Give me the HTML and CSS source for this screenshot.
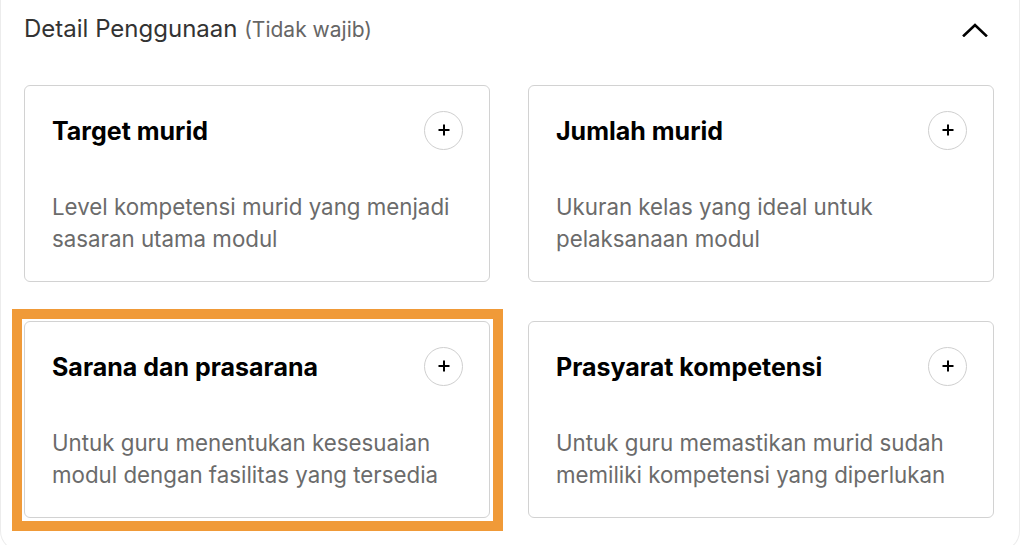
FILE: index.html
```html
<!DOCTYPE html>
<html lang="id">
<head>
<meta charset="utf-8">
<link rel="stylesheet" href="styles.css">
</head>
<body>
<div class="panel">
  <div class="header">
    <div class="heading">Detail Penggunaan <span class="optional">(Tidak wajib)</span></div>
    <svg class="chevron" width="26" height="14" viewBox="0 0 26 14"><path d="M2 12.5 L13 2 L24 12.5" fill="none" stroke="#000" stroke-width="2.6" stroke-linecap="square"/></svg>
  </div>
  <div class="grid">
    <div class="card">
      <div class="card-top">
        <div class="card-title">Target murid</div>
        <div class="add"><svg width="14" height="14" viewBox="0 0 14 14"><path d="M7 1.5V12.5M1.5 7H12.5" stroke="#000" stroke-width="2"/></svg></div>
      </div>
      <div class="card-desc">Level kompetensi murid yang menjadi sasaran utama modul</div>
    </div>
    <div class="card">
      <div class="card-top">
        <div class="card-title">Jumlah murid</div>
        <div class="add"><svg width="14" height="14" viewBox="0 0 14 14"><path d="M7 1.5V12.5M1.5 7H12.5" stroke="#000" stroke-width="2"/></svg></div>
      </div>
      <div class="card-desc">Ukuran kelas yang ideal untuk pelaksanaan modul</div>
    </div>
    <div class="card highlighted">
      <div class="card-top">
        <div class="card-title">Sarana dan prasarana</div>
        <div class="add"><svg width="14" height="14" viewBox="0 0 14 14"><path d="M7 1.5V12.5M1.5 7H12.5" stroke="#000" stroke-width="2"/></svg></div>
      </div>
      <div class="card-desc">Untuk guru menentukan kesesuaian modul dengan fasilitas yang tersedia</div>
    </div>
    <div class="card">
      <div class="card-top">
        <div class="card-title">Prasyarat kompetensi</div>
        <div class="add"><svg width="14" height="14" viewBox="0 0 14 14"><path d="M7 1.5V12.5M1.5 7H12.5" stroke="#000" stroke-width="2"/></svg></div>
      </div>
      <div class="card-desc">Untuk guru memastikan murid sudah memiliki kompetensi yang diperlukan</div>
    </div>
  </div>
</div>
</body>
</html>
```

FILE: styles.css
```css
* { box-sizing: border-box; }
html, body { margin: 0; padding: 0; background: #fff; overflow: hidden; }
body { font-family: Inter, "Noto Sans", sans-serif; width: 1020px; height: 545px; }
.panel {
  width: 1020px;
  height: 551px;
  border: 1px solid #ececec;
  border-top: none;
  border-radius: 0 0 20px 20px;
  padding: 0 25px 0 23px;
}
.header {
  height: 85px;
  display: flex;
  justify-content: space-between;
  padding-top: 14px;
  align-items: flex-start;
}
.heading {
  font-size: 24px;
  line-height: 30px;
  color: #333;
}
.optional { font-size: 21px; color: #666; }
.chevron { margin-top: 9px; margin-right: 6px; }
.grid {
  display: grid;
  grid-template-columns: 466px 466px;
  column-gap: 38px;
  row-gap: 39px;
}
.card {
  position: relative;
  border: 1px solid #d2d2d2;
  border-radius: 6px;
  padding: 25px 26px 25px 27px;
  height: 197px;
  background: #fff;
}
.highlighted::after {
  content: "";
  position: absolute;
  top: -13px;
  left: -13px;
  right: -14px;
  bottom: -14px;
  border: 10px solid #f09a38;
  pointer-events: none;
}
.card-top {
  display: flex;
  justify-content: space-between;
  align-items: center;
  height: 38px;
}
.card-title {
  font-size: 25px;
  font-weight: 700;
  color: #000;
  padding-top: 2px;
}
.add {
  width: 39px;
  height: 39px;
  border: 1px solid #cfcfcf;
  border-radius: 50%;
  display: flex;
  align-items: center;
  justify-content: center;
}
.card-desc {
  margin-top: 42px;
  font-size: 22.3px;
  line-height: 32px;
  color: #6b6b6b;
}
```
